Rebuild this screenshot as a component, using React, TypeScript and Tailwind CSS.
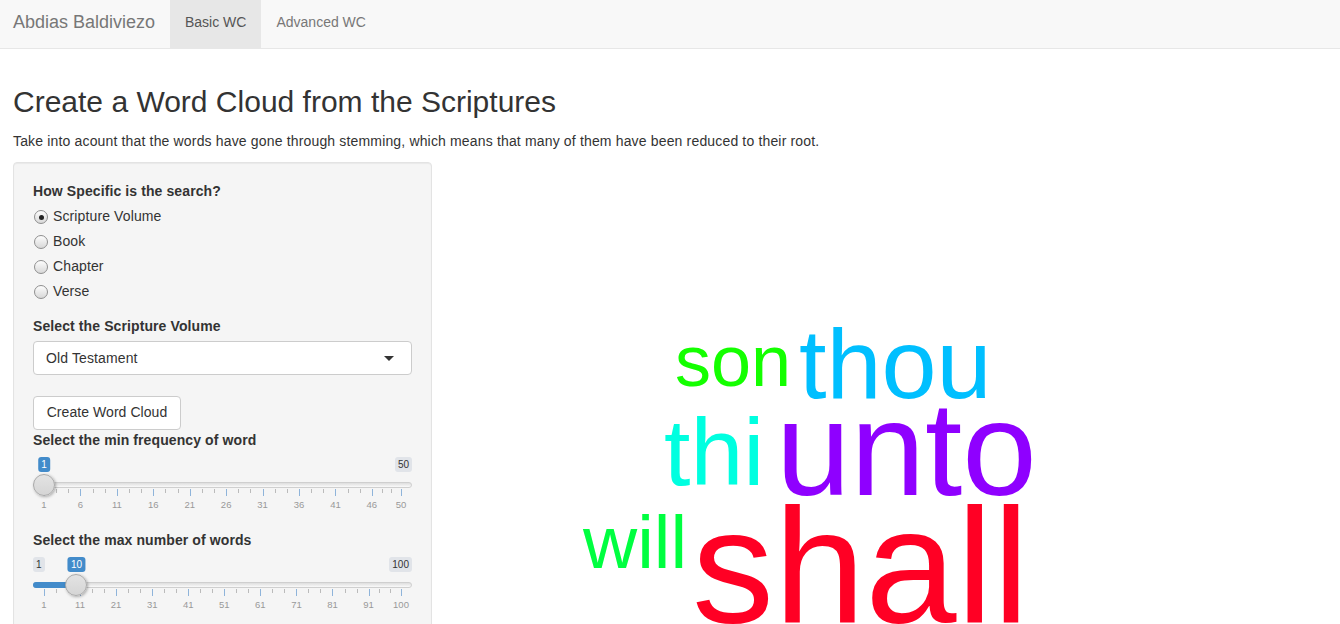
import React from "react";

const font = { fontFamily: '"Liberation Sans", Arial, sans-serif' };

function Radio({ label, checked }: { label: string; checked?: boolean }) {
  return (
    <div className="flex h-5 items-center">
      <span className="ml-px mt-[2px] flex h-[14px] w-[14px] items-center justify-center rounded-full border border-[#8f8f8f] bg-gradient-to-b from-[#fdfdfd] to-[#d8d8d8]">
        {checked && <span className="h-[5px] w-[5px] rounded-full bg-[#222]" />}
      </span>
      <span className="ml-[5px] text-[14px] tracking-[0.12px] text-[#333]">{label}</span>
    </div>
  );
}

type SliderProps = {
  min: number;
  max: number;
  value: number;
  ticks: number[];
  showMin?: boolean;
  fill?: boolean;
};

function Slider({ min, max, value, ticks, showMin, fill }: SliderProps) {
  const pct = (v: number) => ((v - min) / (max - min)) * 100;
  const minors: number[] = [];
  for (let i = 0; i < ticks.length - 1; i++) {
    const a = ticks[i];
    const b = ticks[i + 1];
    minors.push(a + (b - a) / 3, a + ((b - a) * 2) / 3);
  }
  return (
    <div className="relative h-[58px] w-full">
      {showMin && (
        <span className="absolute left-0 top-[2px] rounded-[3px] bg-[#e1e4e9] px-[3px] text-[10px] leading-[15px] text-[#333]">
          {min}
        </span>
      )}
      <span className="absolute right-0 top-[2px] rounded-[3px] bg-[#e1e4e9] px-[3px] text-[10px] leading-[15px] text-[#333]">
        {max}
      </span>
      <div className="absolute left-[11px] right-[11px] top-0 h-full">
        <span
          className="absolute top-[2px] -translate-x-1/2 rounded-[3px] bg-[#428bca] px-[3px] text-[10px] leading-[15px] text-white"
          style={{ left: `${pct(value)}%` }}
        >
          {value}
        </span>
      </div>
      <div className="absolute left-0 right-0 top-[27px] h-[6px] rounded-full border border-[#cfcfcf] bg-gradient-to-b from-[#dedede] to-[#fafafa]" />
      {fill && (
        <div className="absolute left-[11px] right-[11px] top-[27px] h-[6px]">
          <div
            className="h-[6px] -ml-[11px] rounded-l-full bg-[#428bca]"
            style={{ width: `calc(${pct(value)}% + 11px)` }}
          />
        </div>
      )}
      <div className="absolute left-[11px] right-[11px] top-[34px] h-[24px]">
        {minors.map((m, i) => (
          <span
            key={"m" + i}
            className="absolute top-0 h-[4px] w-px bg-[#bbbbbb]"
            style={{ left: `${pct(m)}%` }}
          />
        ))}
        {ticks.map((t) => (
          <React.Fragment key={t}>
            <span
              className="absolute top-0 h-[7px] w-px bg-[#8fb4da]"
              style={{ left: `${pct(t)}%` }}
            />
            <span
              className="absolute top-[10px] -translate-x-1/2 text-[9.5px] leading-[12px] text-[#999]"
              style={{ left: `${pct(t)}%` }}
            >
              {t}
            </span>
          </React.Fragment>
        ))}
        <span
          className="absolute -top-[15px] h-[22px] w-[22px] -translate-x-1/2 rounded-full border border-[#aaaaaa] bg-gradient-to-b from-[#e3e3e3] to-[#d5d5d5] shadow-[1px_1px_3px_rgba(0,0,0,0.3)]"
          style={{ left: `${pct(value)}%` }}
        />
      </div>
    </div>
  );
}

const words = [
  { text: "son", x: 675, y: 386, size: 72, color: "#14ff00" },
  { text: "thou", x: 799, y: 398, size: 99, color: "#00bfff" },
  { text: "thi", x: 664, y: 485, size: 95, color: "#00ffe0" },
  { text: "unto", x: 776, y: 495, size: 134, color: "#8f00ff" },
  { text: "will", x: 583, y: 568, size: 75, color: "#00ff40" },
  { text: "shall", x: 692, y: 622, size: 164, color: "#ff0024" },
];

export default function App() {
  return (
    <div className="min-h-screen bg-white text-[#333]" style={font}>
      <nav className="flex h-[49px] border-b border-[#e7e7e7] bg-[#f8f8f8]">
        <div className="flex w-[170px] items-center pb-[4px] pl-[13px] text-[18px] text-[#777]">
          Abdias Baldiviezo
        </div>
        <div className="flex h-full items-center bg-[#e7e7e7] px-[15px] pb-[3px] text-[14px] text-[#555]">
          Basic WC
        </div>
        <div className="flex h-full items-center px-[15px] pb-[3px] text-[14px] text-[#777]">
          Advanced WC
        </div>
      </nav>

      <div className="px-[13px]">
        <h2 className="mt-[36px] mb-[13px] text-[30px] leading-[33px] font-normal">
          Create a Word Cloud from the Scriptures
        </h2>
        <p className="mb-[11px] text-[14px] leading-5 tracking-[0.16px]">
          Take into acount that the words have gone through stemming, which means that many of them have been reduced to their root.
        </p>

        <div className="flex">
          <div className="w-[419px] shrink-0 rounded-[4px] border border-[#e3e3e3] bg-[#f5f5f5] px-[19px] pt-[18px] pb-[19px] shadow-[inset_0_1px_1px_rgba(0,0,0,0.05)]">
            <div className="mb-[5px] text-[14px] leading-5 font-bold tracking-[0.1px]">How Specific is the search?</div>
            <div className="flex flex-col gap-[5px]">
              <Radio label="Scripture Volume" checked />
              <Radio label="Book" />
              <Radio label="Chapter" />
              <Radio label="Verse" />
            </div>

            <div className="mt-[15px] mb-[5px] text-[14px] leading-5 font-bold tracking-[0.1px]">Select the Scripture Volume</div>
            <div className="flex h-[34px] items-center justify-between rounded-[4px] border border-[#cccccc] bg-white pl-[12px] pr-[17px] text-[14px] tracking-[0.12px]">
              <span>Old Testament</span>
              <span className="h-0 w-0 border-x-[5px] border-t-[5px] border-x-transparent border-t-[#333]" />
            </div>

            <button className="mt-[21px] flex h-[34px] w-[148px] items-center justify-center rounded-[4px] border border-[#cccccc] bg-white pb-px text-[14px] tracking-[0.06px] text-[#333]">
              Create Word Cloud
            </button>

            <div className="mb-[5px] text-[14px] leading-5 font-bold tracking-[0.1px]">Select the min frequency of word</div>
            <Slider min={1} max={50} value={1} ticks={[1, 6, 11, 16, 21, 26, 31, 36, 41, 46, 50]} />

            <div className="mt-[17px] mb-[5px] text-[14px] leading-5 font-bold tracking-[0.1px]">Select the max number of words</div>
            <Slider
              min={1}
              max={100}
              value={10}
              ticks={[1, 11, 21, 31, 41, 51, 61, 71, 81, 91, 100]}
              showMin
              fill
            />
          </div>

          <div className="ml-[15px] flex-1">
            <svg width="881" height="470" viewBox="447 162 881 470" className="block">
              {words.map((w) => (
                <text
                  key={w.text}
                  x={w.x}
                  y={w.y}
                  fontSize={w.size}
                  fill={w.color}
                  fontFamily='"Liberation Sans", Arial, sans-serif'
                >
                  {w.text}
                </text>
              ))}
            </svg>
          </div>
        </div>
      </div>
    </div>
  );
}
